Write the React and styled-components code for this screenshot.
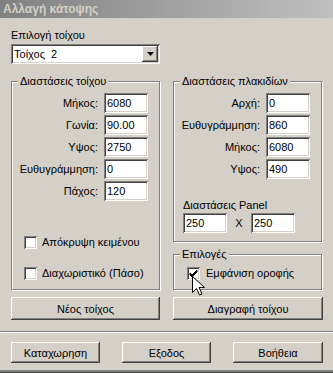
import React from "react";
import styled, { createGlobalStyle } from "styled-components";

const GlobalStyle = createGlobalStyle`
  html, body {
    margin: 0;
    padding: 0;
    background: #d4d0c8;
  }
  body {
    font-family: "Liberation Sans", Arial, sans-serif;
    font-size: 11px;
    color: #000;
  }
  * {
    box-sizing: border-box;
  }
`;

const raised = `
  box-shadow: inset -1px -1px #404040, inset 1px 1px #ffffff,
    inset -2px -2px #808080, inset 2px 2px #d4d0c8;
`;
const sunken = `
  box-shadow: inset 1px 1px #808080, inset -1px -1px #ffffff,
    inset 2px 2px #404040, inset -2px -2px #d4d0c8;
`;

function App() {
  return (
    <>
      <GlobalStyle />
      <Window>
        <TitleBar>Αλλαγή κάτοψης</TitleBar>
        <Body>
          <Label>Επιλογή τοίχου</Label>
          <Select>
            <SelectText>Τοίχος  2</SelectText>
            <DropButton>
              <svg width="7" height="4" viewBox="0 0 7 4">
                <path d="M0 0h7L3.5 4z" fill="#000" />
              </svg>
            </DropButton>
          </Select>

          <Columns>
            <Group>
              <Legend>Διαστάσεις τοίχου</Legend>
              <GroupBody $pad="5px 11px 0 12px">
                <Rows>
                  <Field label="Μήκος:" value="6080" />
                  <Field label="Γωνία:" value="90.00" />
                  <Field label="Υψος:" value="2750" />
                  <Field label="Ευθυγράμμηση:" value="0" />
                  <Field label="Πάχος:" value="120" />
                </Rows>
                <CheckRow $top={35}>
                  <CheckBox />
                  <CheckText>Απόκρυψη κειμένου</CheckText>
                </CheckRow>
                <CheckRow $top={18}>
                  <CheckBox />
                  <CheckText>Διαχωριστικό (Πάσο)</CheckText>
                </CheckRow>
              </GroupBody>
            </Group>

            <Column>
              <Group>
                <Legend>Διαστάσεις πλακιδίων</Legend>
                <GroupBody $pad="5px 11px 8px 9px">
                  <Rows>
                    <Field label="Αρχή:" value="0" />
                    <Field label="Ευθυγράμμηση:" value="860" />
                    <Field label="Μήκος:" value="6080" />
                    <Field label="Υψος:" value="490" />
                  </Rows>
                  <PanelLabel>Διαστάσεις Panel</PanelLabel>
                  <PanelRow>
                    <TextBox defaultValue="250" readOnly />
                    <Times>X</Times>
                    <TextBox defaultValue="250" readOnly />
                  </PanelRow>
                </GroupBody>
              </Group>
              <Group $grow>
                <Legend>Επιλογές</Legend>
                <GroupBody $pad="6px 11px 0 13px">
                  <CheckRow $top={0} $gap={6}>
                    <CheckBox>
                      <svg width="9" height="9" viewBox="0 0 9 9">
                        <path d="M1 4l2 2 5-5v2l-5 5-2-2z" fill="#000" stroke="#000" strokeWidth="1" />
                      </svg>
                    </CheckBox>
                    <CheckText>Εμφάνιση οροφής</CheckText>
                    <Cursor width="12" height="20" viewBox="0 0 12 20">
                      <path
                        d="M0.5 0.5v16l4-4 3 6.5 2.5-1-3-6.5h5.5z"
                        fill="#fff"
                        stroke="#000"
                        strokeWidth="1"
                        strokeLinejoin="miter"
                      />
                    </Cursor>
                  </CheckRow>
                </GroupBody>
              </Group>
            </Column>
          </Columns>

          <ButtonRow>
            <Button $h={23}>Νέος τοίχος</Button>
            <Button $h={23}>Διαγραφή τοίχου</Button>
          </ButtonRow>
        </Body>
        <Separator />
        <Footer>
          <Button $h={21} $w={89}>Καταχωρηση</Button>
          <Button $h={21} $w={89}>Εξοδος</Button>
          <Button $h={21} $w={90}>Βοήθεια</Button>
        </Footer>
      </Window>
    </>
  );
}

function Field({ label, value }) {
  return (
    <FieldRow>
      <FieldLabel>{label}</FieldLabel>
      <TextBox defaultValue={value} readOnly />
    </FieldRow>
  );
}

const Window = styled.div`
  width: 333px;
  height: 373px;
  display: flex;
  flex-direction: column;
  background: #d4d0c8;
  border-bottom: 1px solid #404040;
  box-shadow: inset 0 -2px #808080;
`;

const TitleBar = styled.div`
  height: 18px;
  line-height: 18px;
  padding-left: 3px;
  background: linear-gradient(90deg, #808080, #c0c0c0);
  color: #d4d0c8;
  font-weight: 700;
  font-size: 12px;
  white-space: nowrap;
`;

const Body = styled.div`
  padding: 11px 10px 0 11px;
`;

const Label = styled.div`
  line-height: 13px;
  height: 13px;
`;

const Select = styled.div`
  margin-top: 2px;
  width: 149px;
  height: 20px;
  display: flex;
  align-items: stretch;
  padding: 2px;
  background: #fff;
  ${sunken}
`;

const SelectText = styled.div`
  flex: 1;
  padding-left: 1px;
  line-height: 16px;
  white-space: pre;
`;

const DropButton = styled.div`
  width: 16px;
  display: flex;
  align-items: center;
  justify-content: center;
  background: #d4d0c8;
  ${raised}
`;

const Columns = styled.div`
  margin-top: 11px;
  display: grid;
  grid-template-columns: 149px 149px;
  column-gap: 13px;
  height: 215px;
`;

const Column = styled.div`
  display: flex;
  flex-direction: column;
  gap: 6px;
`;

const Group = styled.fieldset`
  margin: 0;
  padding: 0;
  min-width: 0;
  border: 1px solid #808080;
  box-shadow: 1px 1px 0 #ffffff, inset 1px 1px 0 #ffffff;
  flex: ${(p) => (p.$grow ? 1 : "none")};
`;

const Legend = styled.legend`
  margin-left: 6px;
  padding: 0 2px;
  line-height: 13px;
  background: #d4d0c8;
`;

const GroupBody = styled.div`
  padding: ${(p) => p.$pad};
`;

const Rows = styled.div`
  display: flex;
  flex-direction: column;
  gap: 2px;
`;

const FieldRow = styled.div`
  display: flex;
  align-items: center;
  justify-content: flex-end;
  gap: 6px;
  height: 20px;
`;

const FieldLabel = styled.span`
  white-space: nowrap;
`;

const TextBox = styled.input`
  width: 44px;
  height: 20px;
  border: 0;
  margin: 0;
  padding: 0 3px;
  background: #fff;
  font-family: inherit;
  font-size: 11px;
  color: #000;
  outline: none;
  ${sunken}
`;

const CheckRow = styled.div`
  position: relative;
  margin-top: ${(p) => p.$top}px;
  display: flex;
  align-items: center;
  gap: ${(p) => p.$gap ?? 5}px;
  height: 13px;
`;

const CheckBox = styled.div`
  width: 13px;
  height: 13px;
  flex: none;
  display: flex;
  align-items: center;
  justify-content: center;
  background: #fff;
  ${sunken}
`;

const CheckText = styled.span`
  white-space: nowrap;
  line-height: 13px;
`;

const Cursor = styled.svg`
  position: absolute;
  left: 5px;
  top: 9px;
  overflow: visible;
`;

const PanelLabel = styled.div`
  margin-top: 20px;
  line-height: 13px;
`;

const PanelRow = styled.div`
  margin-top: 1px;
  display: flex;
  align-items: center;
`;

const Times = styled.span`
  width: 24px;
  text-align: center;
`;

const ButtonRow = styled.div`
  margin-top: 7px;
  display: grid;
  grid-template-columns: 149px 150px;
  column-gap: 13px;
`;

const Button = styled.div`
  height: ${(p) => p.$h}px;
  width: ${(p) => (p.$w ? `${p.$w}px` : "auto")};
  display: flex;
  align-items: center;
  justify-content: center;
  background: #d4d0c8;
  white-space: nowrap;
  ${raised}
`;

const Separator = styled.div`
  margin-top: 11px;
  height: 2px;
  border-top: 1px solid #808080;
  border-bottom: 1px solid #ffffff;
`;

const Footer = styled.div`
  margin-top: 9px;
  padding: 0 10px 0 11px;
  display: flex;
  justify-content: space-between;
`;

export default App;
